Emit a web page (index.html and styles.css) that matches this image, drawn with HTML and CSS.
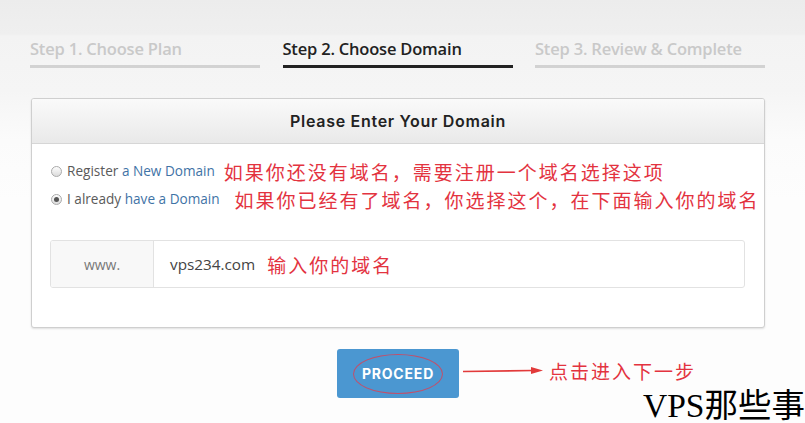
FILE: index.html
```html
<!DOCTYPE html>
<html lang="zh-CN">
<head>
<meta charset="utf-8">
<title>Choose Domain</title>
<link rel="stylesheet" href="styles.css">
</head>
<body>
<div class="page">
  <div class="steps">
    <div class="step">Step 1. Choose Plan</div>
    <div class="step active">Step 2. Choose Domain</div>
    <div class="step">Step 3. Review &amp; Complete</div>
  </div>

  <div class="card">
    <div class="card-head">Please Enter Your Domain</div>
    <div class="card-body">
      <div class="opt"><span class="radio"></span>Register <a class="lnk">a New Domain</a><span class="note n1">如果你还没有域名，需要注册一个域名选择这项</span></div>
      <div class="opt"><span class="radio on"></span>I already <a class="lnk">have a Domain</a><span class="note n2">如果你已经有了域名，你选择这个，在下面输入你的域名</span></div>
      <div class="group">
        <div class="addon">www.</div>
        <div class="field">vps234.com<span class="note n3">输入你的域名</span></div>
      </div>
    </div>
  </div>

  <div class="actions">
    <div class="btn-wrap">
      <button class="btn">PROCEED</button>
      <span class="ring"></span>
      <div class="callout">
        <svg class="arrow" width="80" height="10" viewBox="0 0 80 10"><line x1="0" y1="5.5" x2="70" y2="4.5" stroke="#e23a3a" stroke-width="1.6"/><polygon points="68,1 80,4.6 68,8" fill="#e23a3a"/></svg>
        <span class="note n4">点击进入下一步</span>
      </div>
    </div>
  </div>
</div>
<div class="mark">VPS那些事</div>
</body>
</html>
```

FILE: styles.css
```css
html, body {
  margin: 0;
  padding: 0;
}
body {
  width: 805px;
  height: 423px;
  overflow: hidden;
  position: relative;
  font-family: "Open Sans", "Liberation Sans", sans-serif;
  background: linear-gradient(#ececec 0, #efefef 34px, #f3f3f3 36px, #f5f5f5 90px, #fbfbfb 140px, #fdfdfd 200px);
}
.page {
  width: 735px;
  margin-left: 30px;
  padding-top: 37px;
}
.steps {
  display: grid;
  grid-template-columns: 230px 230px 230px;
  column-gap: 22.5px;
}
.step {
  font-size: 16.5px;
  font-weight: 600;
  line-height: 24px;
  color: #c9c9c9;
  padding-bottom: 4px;
  border-bottom: 3px solid #d2d2d2;
  letter-spacing: -0.2px;
  white-space: nowrap;
}
.step.active {
  color: #222;
  border-bottom-color: #222;
}
.card {
  margin-top: 30px;
  margin-left: 1px;
  border: 1px solid #cfcfcf;
  border-radius: 3px;
  background: #fff;
  box-shadow: 0 1px 2px rgba(0,0,0,0.12);
  overflow: hidden;
}
.card-head {
  height: 44px;
  line-height: 44px;
  text-align: center;
  font-family: Inter, "Open Sans", sans-serif;
  font-weight: 600;
  font-size: 16px;
  color: #222;
  letter-spacing: 0.7px;
  background: linear-gradient(#fafafa, #e9e9e9);
  border-bottom: 1px solid #d6d6d6;
}
.card-body {
  padding: 13px 19px 39px 18px;
}
.opt {
  display: block;
  height: 28px;
  line-height: 28px;
  font-size: 13.6px;
  color: #5a5a5a;
  white-space: nowrap;
}
.radio {
  display: inline-block;
  vertical-align: middle;
  width: 9px;
  height: 9px;
  border: 1px solid #aaa;
  border-radius: 50%;
  background: linear-gradient(#fdfdfd, #dcdcdc);
  margin: -2px 5px 0 1px;
  position: relative;
}
.radio.on::after {
  content: "";
  position: absolute;
  left: 2px;
  top: 2px;
  width: 5px;
  height: 5px;
  border-radius: 50%;
  background: #555;
}
.lnk {
  color: #3f73a6;
}
.note {
  font-family: "Noto Sans CJK SC", sans-serif;
  color: #e3333f;
  font-size: 19px;
  letter-spacing: 2px;
  vertical-align: middle;
}
.n1 { margin-left: 9px; }
.n2 { margin-left: 15px; }
.group {
  margin-top: 27px;
  display: flex;
  height: 46px;
  border: 1px solid #e2e2e2;
  border-radius: 3px;
  overflow: hidden;
}
.addon {
  width: 102px;
  background: #f8f8f8;
  border-right: 1px solid #e2e2e2;
  color: #777;
  font-size: 14px;
  display: flex;
  align-items: center;
  justify-content: center;
}
.field {
  flex: 1;
  display: flex;
  align-items: center;
  padding-left: 16px;
  font-size: 15.3px;
  color: #444;
  white-space: nowrap;
}
.n3 { margin-left: 12px; }
.actions {
  display: flex;
  justify-content: center;
  padding-left: 1px;
  margin-top: 21px;
}
.btn-wrap {
  position: relative;
}
.btn {
  display: block;
  width: 122px;
  height: 49px;
  border: 0;
  border-radius: 3px;
  background: #4b97d1;
  color: #fff;
  font-family: Inter, "Open Sans", sans-serif;
  font-weight: 700;
  font-size: 14px;
  letter-spacing: 0.8px;
}
.ring {
  position: absolute;
  left: 16px;
  top: 5px;
  width: 90px;
  height: 40px;
  border: 1.5px solid #c0506c;
  border-radius: 50%;
  box-sizing: border-box;
}
.callout {
  position: absolute;
  left: 126px;
  top: 8px;
  display: flex;
  align-items: center;
  white-space: nowrap;
}
.arrow { display: block; }
.n4 { margin-left: 6px; }
.mark {
  position: absolute;
  left: 643px;
  top: 378px;
  font-family: "Liberation Serif", "Noto Sans CJK SC", serif;
  font-size: 33.5px;
  color: #000;
  white-space: nowrap;
}
```
